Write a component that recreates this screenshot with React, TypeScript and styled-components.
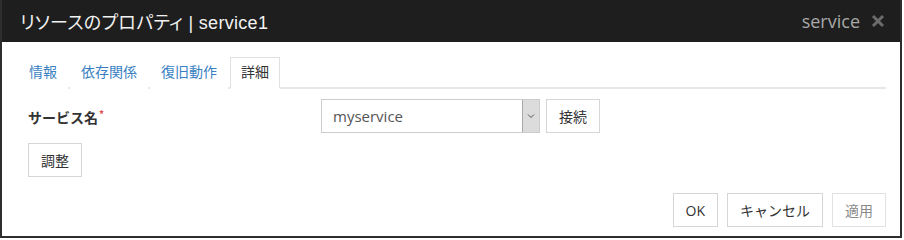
import React from "react";
import styled, { createGlobalStyle } from "styled-components";

const GlobalStyle = createGlobalStyle`
  html, body {
    margin: 0;
    padding: 0;
    background: #ffffff;
  }
  body {
    font-family: "Segoe UI", "Open Sans", "Noto Sans CJK JP", sans-serif;
    color: #333333;
  }
`;

const Dialog = styled.div`
  width: 902px;
  height: 238px;
  box-sizing: border-box;
  border: 2px solid #2e2e2e;
  border-top: none;
  background: #ffffff;
  display: flex;
  flex-direction: column;
`;

const Header = styled.div`
  height: 42px;
  background: #1e1e1e;
  display: flex;
  align-items: center;
  justify-content: space-between;
  padding: 0 15px 0 18px;
`;

const Title = styled.div`
  font-size: 18px;
  color: #f2f2f2;
  font-family: "Liberation Sans", "Noto Sans CJK JP", sans-serif;
  font-feature-settings: "palt";
  letter-spacing: 0.3px;
`;

const HeaderRight = styled.div`
  display: flex;
  align-items: center;
  gap: 11px;
`;

const ResourceType = styled.span`
  font-size: 18px;
  color: #a8a8a8;
  font-family: "Open Sans", sans-serif;
`;

const CloseIcon = styled.svg`
  width: 14px;
  height: 14px;
  display: block;
`;

const Body = styled.div`
  flex: 1;
  padding: 14px 14px 0 16px;
  display: flex;
  flex-direction: column;
`;

const TabBar = styled.div`
  display: flex;
  align-items: flex-end;
  border-bottom: 2px solid #e6e6e6;
  height: 31px;
`;

const Tab = styled.div<{ $active?: boolean }>`
  box-sizing: border-box;
  height: 32px;
  margin-right: 2px;
  margin-bottom: -2px;
  padding: 0 10px 3px;
  display: flex;
  align-items: center;
  font-size: 14px;
  font-family: "Noto Sans CJK JP", sans-serif;
  color: ${(p) => (p.$active ? "#333333" : "#3a7fc2")};
  background: #ffffff;
  border: 1px solid ${(p) => (p.$active ? "#e0e0e0" : "transparent")};
  border-bottom: 2px solid ${(p) => (p.$active ? "#ffffff" : "transparent")};
`;

const FormRow = styled.div`
  display: flex;
  align-items: center;
  margin-top: 10px;
  height: 34px;
`;

const Label = styled.div`
  width: 293px;
  padding-left: 10px;
  font-size: 14px;
  font-weight: 700;
  font-family: "Noto Sans CJK JP", sans-serif;
  color: #333333;
`;

const Required = styled.sup`
  color: #d9534f;
  font-size: 10px;
  margin-left: 1px;
  vertical-align: 5px;
`;

const Select = styled.div`
  box-sizing: border-box;
  width: 219px;
  height: 34px;
  border: 1px solid #cccccc;
  display: flex;
  align-items: stretch;
  margin-right: 6px;
`;

const SelectValue = styled.div`
  flex: 1;
  display: flex;
  align-items: center;
  padding-left: 11px;
  font-size: 15px;
  color: #555555;
`;

const SelectArrow = styled.div`
  width: 16px;
  background: #dcdcdc;
  border-left: 1px solid #a9a9a9;
  display: flex;
  align-items: center;
  justify-content: center;
`;

const Button = styled.button<{ $disabled?: boolean }>`
  box-sizing: border-box;
  height: 34px;
  padding: 0 12px;
  background: #ffffff;
  border: 1px solid #d6d6d6;
  font-size: 14px;
  font-family: "Segoe UI", "Open Sans", "Noto Sans CJK JP", sans-serif;
  color: ${(p) => (p.$disabled ? "#8a8a8a" : "#333333")};
  cursor: ${(p) => (p.$disabled ? "default" : "pointer")};
  border-color: ${(p) => (p.$disabled ? "#e2e2e2" : "#d6d6d6")};
`;

const Indented = styled.div`
  margin-top: 10px;
  padding-left: 10px;
`;

const Footer = styled.div`
  display: flex;
  justify-content: flex-end;
  gap: 9px;
  margin-top: 16px;
`;

export default function App() {
  return (
    <>
      <GlobalStyle />
      <Dialog>
        <Header>
          <Title>リソースのプロパティ | service1</Title>
          <HeaderRight>
            <ResourceType>service</ResourceType>
            <CloseIcon viewBox="0 0 14 14">
              <path d="M2 2 L12 12 M12 2 L2 12" stroke="#6b6b6b" strokeWidth="3" strokeLinecap="butt" />
            </CloseIcon>
          </HeaderRight>
        </Header>
        <Body>
          <TabBar>
            <Tab>情報</Tab>
            <Tab>依存関係</Tab>
            <Tab>復旧動作</Tab>
            <Tab $active>詳細</Tab>
          </TabBar>
          <FormRow>
            <Label>
              サービス名<Required>*</Required>
            </Label>
            <Select>
              <SelectValue>myservice</SelectValue>
              <SelectArrow>
                <svg width="8" height="6" viewBox="0 0 8 6">
                  <path d="M1 1.5 L4 4.5 L7 1.5" fill="none" stroke="#555" strokeWidth="1" />
                </svg>
              </SelectArrow>
            </Select>
            <Button>接続</Button>
          </FormRow>
          <Indented>
            <Button>調整</Button>
          </Indented>
          <Footer>
            <Button>OK</Button>
            <Button>キャンセル</Button>
            <Button $disabled>適用</Button>
          </Footer>
        </Body>
      </Dialog>
    </>
  );
}
